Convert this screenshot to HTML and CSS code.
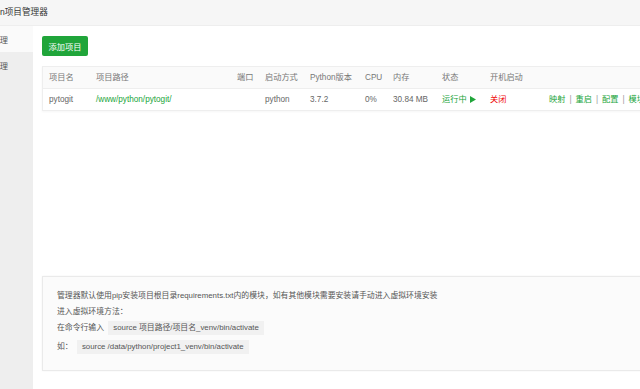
FILE: index.html
```html
<!DOCTYPE html>
<html>
<head>
  <meta charset="utf-8">
  <title>Python项目管理器</title>
  <link rel="stylesheet" href="styles.css">
</head>
<body>
  <div class="dialog">
    <div class="dialog-title"><span class="title-text">Python项目管理器</span></div>

    <div class="dialog-body">
      <div class="side-menu">
        <div class="menu-item active"><span>项目管理</span></div>
        <div class="menu-item"><span>版本管理</span></div>
      </div>

      <div class="main">
        <div class="toolbar">
          <button class="btn-green">添加项目</button>
        </div>

        <div class="table-box">
          <table class="project-table">
            <colgroup>
              <col style="width: 47px">
              <col style="width: 141px">
              <col style="width: 28px">
              <col style="width: 45px">
              <col style="width: 55px">
              <col style="width: 28px">
              <col style="width: 49px">
              <col style="width: 48px">
              <col style="width: 58px">
              <col>
            </colgroup>
            <thead>
              <tr>
                <th>项目名</th>
                <th>项目路径</th>
                <th>端口</th>
                <th>启动方式</th>
                <th>Python版本</th>
                <th>CPU</th>
                <th>内存</th>
                <th>状态</th>
                <th>开机启动</th>
                <th></th>
              </tr>
            </thead>
            <tbody>
              <tr>
                <td>pytogit</td>
                <td><a class="link-green">/www/python/pytogit/</a></td>
                <td></td>
                <td>python</td>
                <td>3.7.2</td>
                <td>0%</td>
                <td>30.84 MB</td>
                <td class="status-run">运行中<svg class="play-icon" width="6" height="7" viewBox="0 0 6 7"><path d="M0 0 L6 3.5 L0 7 Z" fill="#20a53a"/></svg></td>
                <td class="status-off">关闭</td>
                <td class="actions">
                  <a class="link-green">映射</a><span class="sep">|</span><a class="link-green">重启</a><span class="sep">|</span><a class="link-green">配置</a><span class="sep">|</span><a class="link-green">模块</a><span class="sep">|</span><a class="link-green">删除</a>
                </td>
              </tr>
            </tbody>
          </table>
        </div>

        <div class="tips">
          <p>管理器默认使用pip安装项目根目录requirements.txt内的模块，如有其他模块需要安装请手动进入虚拟环境安装</p>
          <p>进入虚拟环境方法：</p>
          <p>在命令行输入 <code>source 项目路径/项目名_venv/bin/activate</code></p>
          <p class="gap">如： <code>source /data/python/project1_venv/bin/activate</code></p>
        </div>
      </div>
    </div>
  </div>
</body>
</html>
```

FILE: styles.css
```css
html, body {
  margin: 0;
  padding: 0;
  background: #fff;
}

body {
  font-family: "Liberation Sans", "Noto Sans CJK SC", sans-serif;
  font-size: 8.2px;
  color: #666;
  width: 640px;
  height: 389px;
  overflow: hidden;
}

.dialog {
  display: flex;
  flex-direction: column;
  height: 389px;
}

.dialog-title {
  height: 25px;
  line-height: 25px;
  background: #f6f6f6;
  border-bottom: 1px solid #eee;
  white-space: nowrap;
  overflow: hidden;
}

.title-text {
  display: inline-block;
  margin-left: -22px;
  font-size: 8.6px;
  color: #333;
}

.dialog-body {
  flex: 1;
  display: flex;
  min-height: 0;
}

.side-menu {
  width: 33px;
  flex-shrink: 0;
  background: #eee;
}

.menu-item {
  height: 26px;
  display: flex;
  align-items: center;
  justify-content: flex-end;
  padding-right: 25px;
  overflow: hidden;
  white-space: nowrap;
  color: #555;
}

.menu-item.active {
  background: #fafafa;
}

.main {
  flex: 1;
  min-width: 0;
  padding: 10px 0 0 9px;
  overflow: hidden;
}

.toolbar {
  margin-bottom: 10px;
}

.btn-green {
  display: block;
  height: 20px;
  width: 46px;
  padding: 0;
  border: none;
  border-radius: 2px;
  background-color: #20a53a;
  color: #fff;
  font-family: inherit;
  font-size: 8.2px;
  cursor: pointer;
}

.table-box {
  width: 640px;
  border: 1px solid #eee;
  box-shadow: 0 1px 2px rgba(0,0,0,0.04);
}

.project-table {
  width: 100%;
  border-collapse: collapse;
  table-layout: fixed;
}

.project-table th,
.project-table td {
  height: 21px;
  line-height: 21px;
  padding: 0 6px;
  text-align: left;
  vertical-align: middle;
  white-space: nowrap;
  font-weight: normal;
}

.project-table th {
  background: #fafafa;
  border-bottom: 1px solid #eee;
  color: #777;
}

.link-green {
  color: #20a53a;
  text-decoration: none;
}

.status-run {
  color: #20a53a;
}

.play-icon {
  vertical-align: -1px;
  margin-left: 3px;
}

.status-off {
  color: #ef0808;
}

.actions {
  padding-left: 7px !important;
}

.sep {
  color: #999;
  margin: 0 4px;
}

.tips {
  width: 640px;
  margin-top: 165px;
  height: 95px;
  box-sizing: border-box;
  padding: 11px 14px;
  background: #fbfbfb;
  border: 1px solid #eaeaea;
  box-shadow: 0 0 2px rgba(0,0,0,0.05);
}

.tips p {
  margin: 0;
  height: 16px;
  line-height: 16px;
  font-size: 7.85px;
  color: #555;
  white-space: nowrap;
}

.tips p.gap {
  margin-top: 3px;
}

.tips code {
  display: inline-block;
  vertical-align: middle;
  font-family: inherit;
  font-size: 7.85px;
  line-height: 14px;
  padding: 0 5px;
  margin-left: 2px;
  background: #f1f1f1;
  color: #555;
}
```
